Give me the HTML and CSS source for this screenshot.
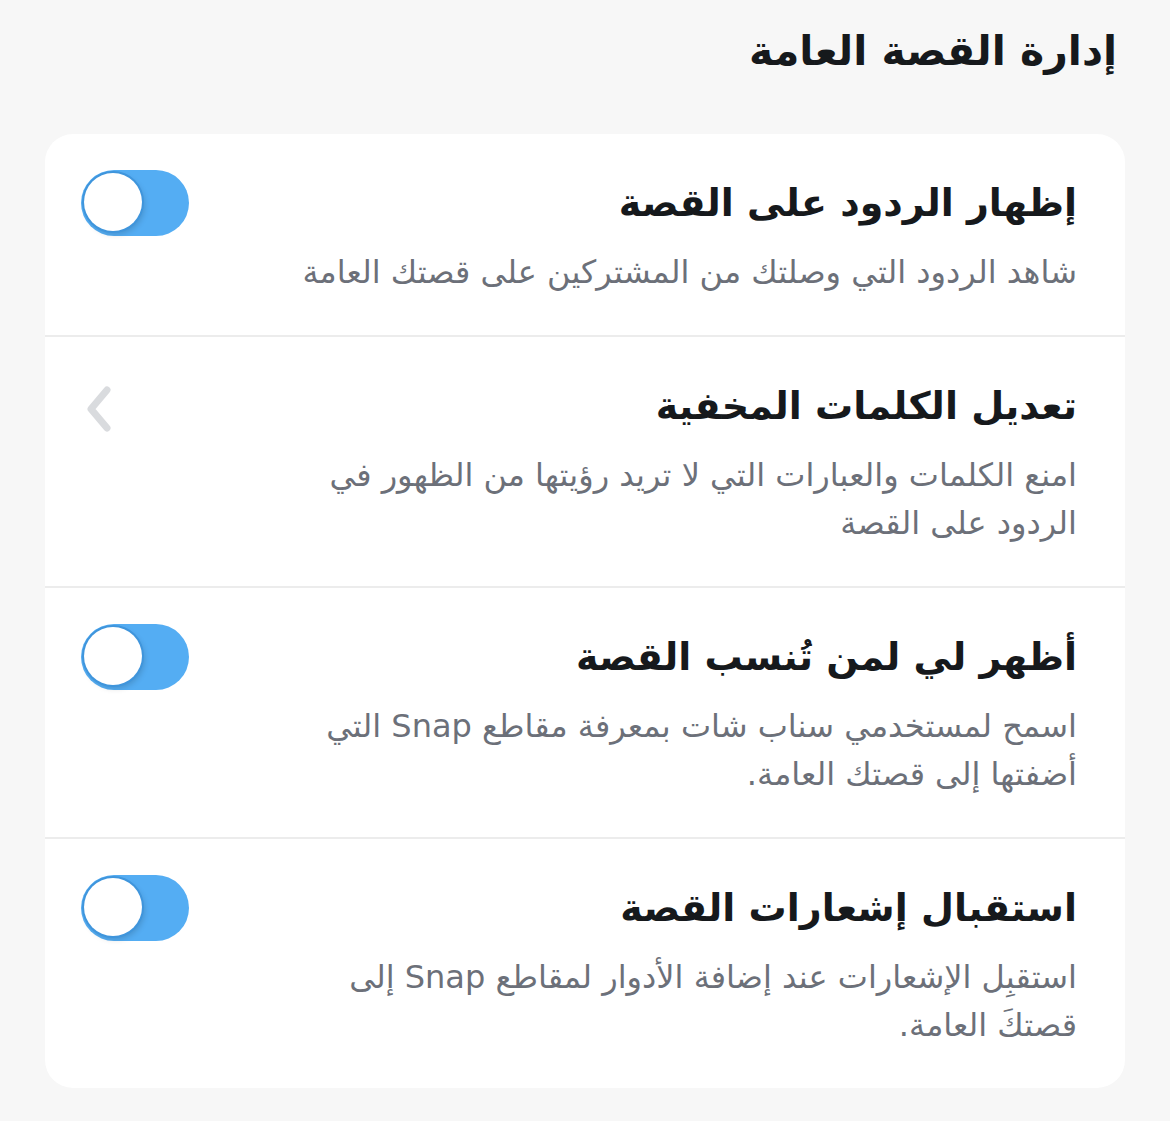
FILE: index.html
```html
<!DOCTYPE html>
<html lang="ar" dir="rtl">
<head>
    <meta charset="UTF-8">
    <meta name="viewport" content="width=device-width, initial-scale=1.0">
    <title>إدارة القصة العامة</title>
    <link rel="stylesheet" href="styles.css">
</head>
<body>
    <div class="page">
        <h1 class="page-title">إدارة القصة العامة</h1>

        <div class="settings-card">
            <div class="setting-row">
                <div class="setting-text">
                    <div class="setting-title">إظهار الردود على القصة</div>
                    <div class="setting-desc">شاهد الردود التي وصلتك من المشتركين على قصتك العامة</div>
                </div>
                <div class="toggle"><span class="knob"></span></div>
            </div>

            <div class="setting-row">
                <div class="setting-text">
                    <div class="setting-title">تعديل الكلمات المخفية</div>
                    <div class="setting-desc">امنع الكلمات والعبارات التي لا تريد رؤيتها من الظهور في الردود على القصة</div>
                </div>
                <div class="chevron">
                    <svg width="30" height="48" viewBox="0 0 30 48">
                        <path d="M23 5 L7 24 L23 43" fill="none" stroke="#d9dbde" stroke-width="7" stroke-linecap="round" stroke-linejoin="round"/>
                    </svg>
                </div>
            </div>

            <div class="setting-row">
                <div class="setting-text">
                    <div class="setting-title">أظهر لي لمن تُنسب القصة</div>
                    <div class="setting-desc">اسمح لمستخدمي سناب شات بمعرفة مقاطع Snap التي أضفتها إلى قصتك العامة.</div>
                </div>
                <div class="toggle"><span class="knob"></span></div>
            </div>

            <div class="setting-row">
                <div class="setting-text">
                    <div class="setting-title">استقبال إشعارات القصة</div>
                    <div class="setting-desc">استقبِل الإشعارات عند إضافة الأدوار لمقاطع Snap إلى قصتكَ العامة.</div>
                </div>
                <div class="toggle"><span class="knob"></span></div>
            </div>
        </div>
    </div>
</body>
</html>
```

FILE: styles.css
```css
body {
    margin: 0;
    background-color: #f7f7f7;
    font-family: "DejaVu Sans", sans-serif;
    color: #16191c;
}
.page {
    padding: 26px 45px 0 45px;
}
.page-title {
    margin: 0;
    padding-right: 8px;
    font-size: 41px;
    line-height: 50px;
    font-weight: bold;
    height: 108px;
}
.settings-card {
    background: #ffffff;
    border-radius: 28px;
    overflow: hidden;
}
.setting-row {
    display: flex;
    align-items: flex-start;
    gap: 98px;
    padding: 44px 48px 39px 36px;
    border-bottom: 2px solid #ececec;
}
.setting-row:last-child {
    border-bottom: none;
}
.setting-text {
    flex: 1;
}
.setting-title {
    font-size: 38px;
    line-height: 50px;
    font-weight: bold;
    color: #16191c;
}
.setting-desc {
    margin-top: 20px;
    font-size: 32px;
    line-height: 48px;
    color: #6c7079;
}
.toggle {
    position: relative;
    width: 108px;
    height: 66px;
    border-radius: 33px;
    background-color: #54adf3;
    margin-top: -8px;
    flex-shrink: 0;
}
.toggle .knob {
    position: absolute;
    left: 3px;
    top: 3px;
    width: 58px;
    height: 58px;
    border-radius: 50%;
    background: #ffffff;
    box-shadow: 0 0 0 2px #3f95dc, 2px 3px 6px rgba(0, 0, 0, 0.18);
}
.chevron {
    width: 108px;
    flex-shrink: 0;
    display: flex;
    justify-content: flex-end;
    padding-left: 3px;
    box-sizing: border-box;
    margin-top: 4px;
}
```
